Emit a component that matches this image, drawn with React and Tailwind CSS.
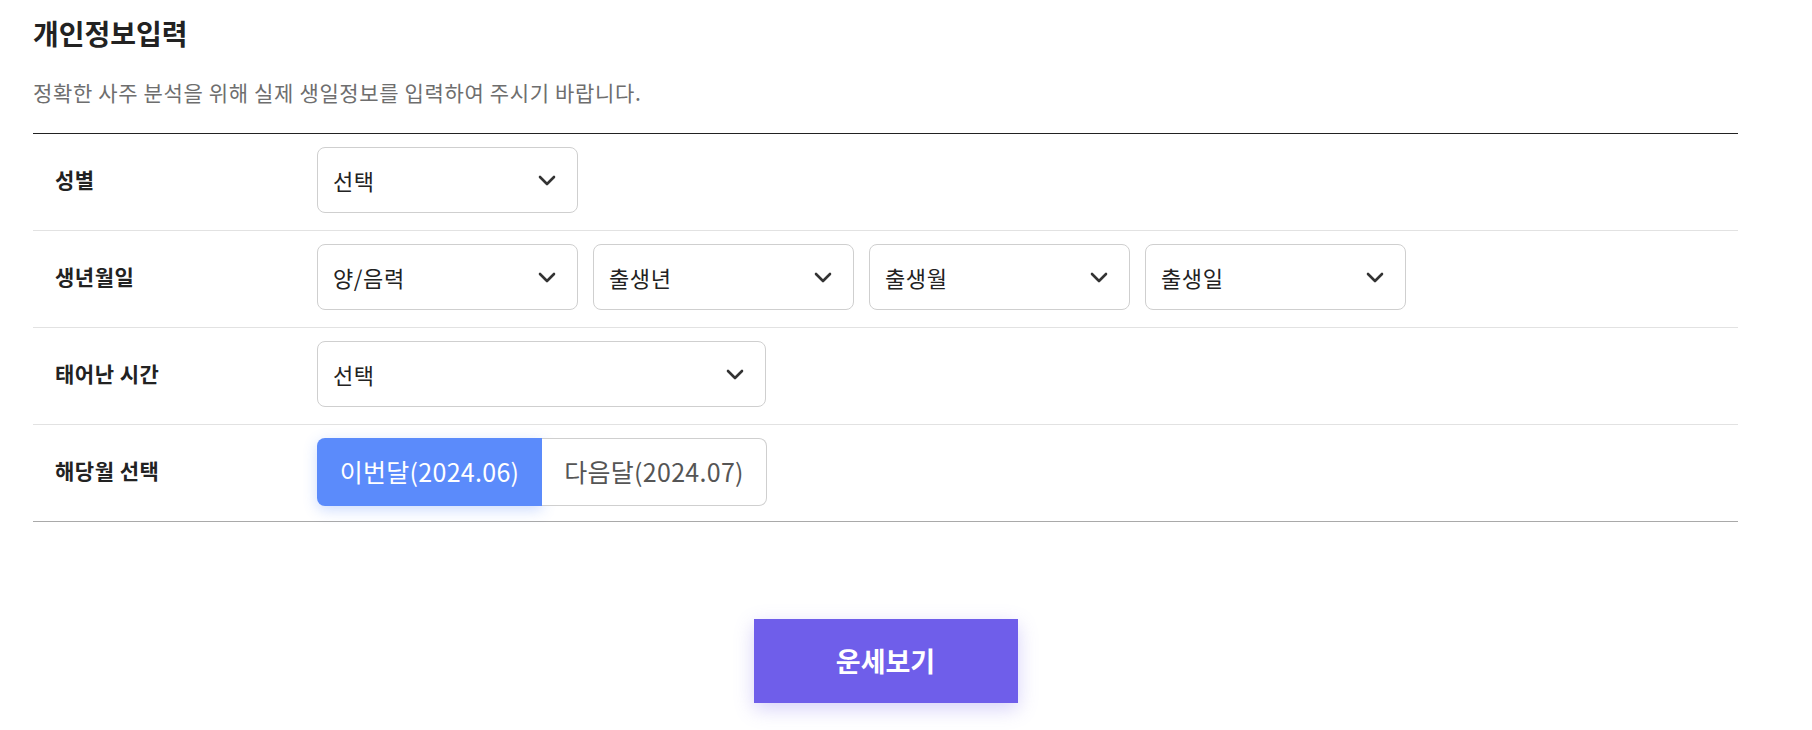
import React, { useState } from 'react';

const font = { fontFamily: '"Noto Sans CJK KR", "Noto Sans", sans-serif' };

function Chevron() {
  return (
    <svg width="18" height="11" viewBox="0 0 18 11" fill="none" className="shrink-0">
      <polyline points="2,2 9,9 16,2" stroke="#333" strokeWidth="2.6" strokeLinecap="round" strokeLinejoin="round" />
    </svg>
  );
}

function Select({ label, className = 'w-[261px]' }) {
  return (
    <div
      className={`${className} h-[66px] rounded-[8px] border border-[#cfcfcf] bg-white flex items-center justify-between pl-[15px] pr-[21px]`}
    >
      <span className="text-[22px] tracking-[0.6px] text-[#222] leading-none">{label}</span>
      <Chevron />
    </div>
  );
}

function Row({ title, last, children }) {
  return (
    <div
      className={`flex items-start pt-[13px] h-[97px] border-b ${last ? 'border-[#a9a9a9]' : 'border-[#e2e2e2]'}`}
    >
      <div className="w-[284px] h-[66px] flex items-center pl-[22px] text-[21px] tracking-[0.5px] font-bold text-[#222]">
        {title}
      </div>
      <div className="flex items-center gap-[15px]">{children}</div>
    </div>
  );
}

export default function App() {
  const [month, setMonth] = useState(0);
  return (
    <div className="bg-white min-h-[730px] w-full" style={font}>
      <div className="ml-[33px] w-[1705px] pt-[14px]">
        <h2 className="text-[28px] font-bold text-[#222] leading-[38px]">개인정보입력</h2>
        <p className="mt-[26px] text-[21px] tracking-[0.65px] text-[#6e6e6e] leading-[28px]">
          정확한 사주 분석을 위해 실제 생일정보를 입력하여 주시기 바랍니다.
        </p>

        <div className="mt-[27px] border-t border-[#222]">
          <Row title="성별">
            <Select label="선택" />
          </Row>
          <Row title="생년월일">
            <Select label="양/음력" />
            <Select label="출생년" />
            <Select label="출생월" />
            <Select label="출생일" />
          </Row>
          <Row title="태어난 시간">
            <Select label="선택" className="w-[449px]" />
          </Row>
          <Row title="해당월 선택" last>
            <div className="flex h-[68px] w-[450px]">
              <button
                onClick={() => setMonth(0)}
                className={`w-[225px] h-full rounded-l-[8px] text-[25px] tracking-[0.3px] ${
                  month === 0
                    ? 'bg-[#5b8bfb] text-white shadow-[0_4px_14px_rgba(91,139,251,0.3)]'
                    : 'bg-white text-[#555] border border-[#cfcfcf] border-r-0'
                }`}
              >
                이번달(2024.06)
              </button>
              <button
                onClick={() => setMonth(1)}
                className={`w-[225px] h-full rounded-r-[8px] text-[25px] tracking-[0.3px] ${
                  month === 1
                    ? 'bg-[#5b8bfb] text-white shadow-[0_4px_14px_rgba(91,139,251,0.3)]'
                    : 'bg-white text-[#555] border border-[#cfcfcf] border-l-0'
                }`}
              >
                다음달(2024.07)
              </button>
            </div>
          </Row>
        </div>

        <div className="flex justify-center mt-[97px]">
          <button className="w-[264px] h-[84px] bg-[#6f5eea] text-white text-[27px] font-bold shadow-[0_6px_18px_rgba(111,94,234,0.28)]">
            운세보기
          </button>
        </div>
      </div>
    </div>
  );
}
